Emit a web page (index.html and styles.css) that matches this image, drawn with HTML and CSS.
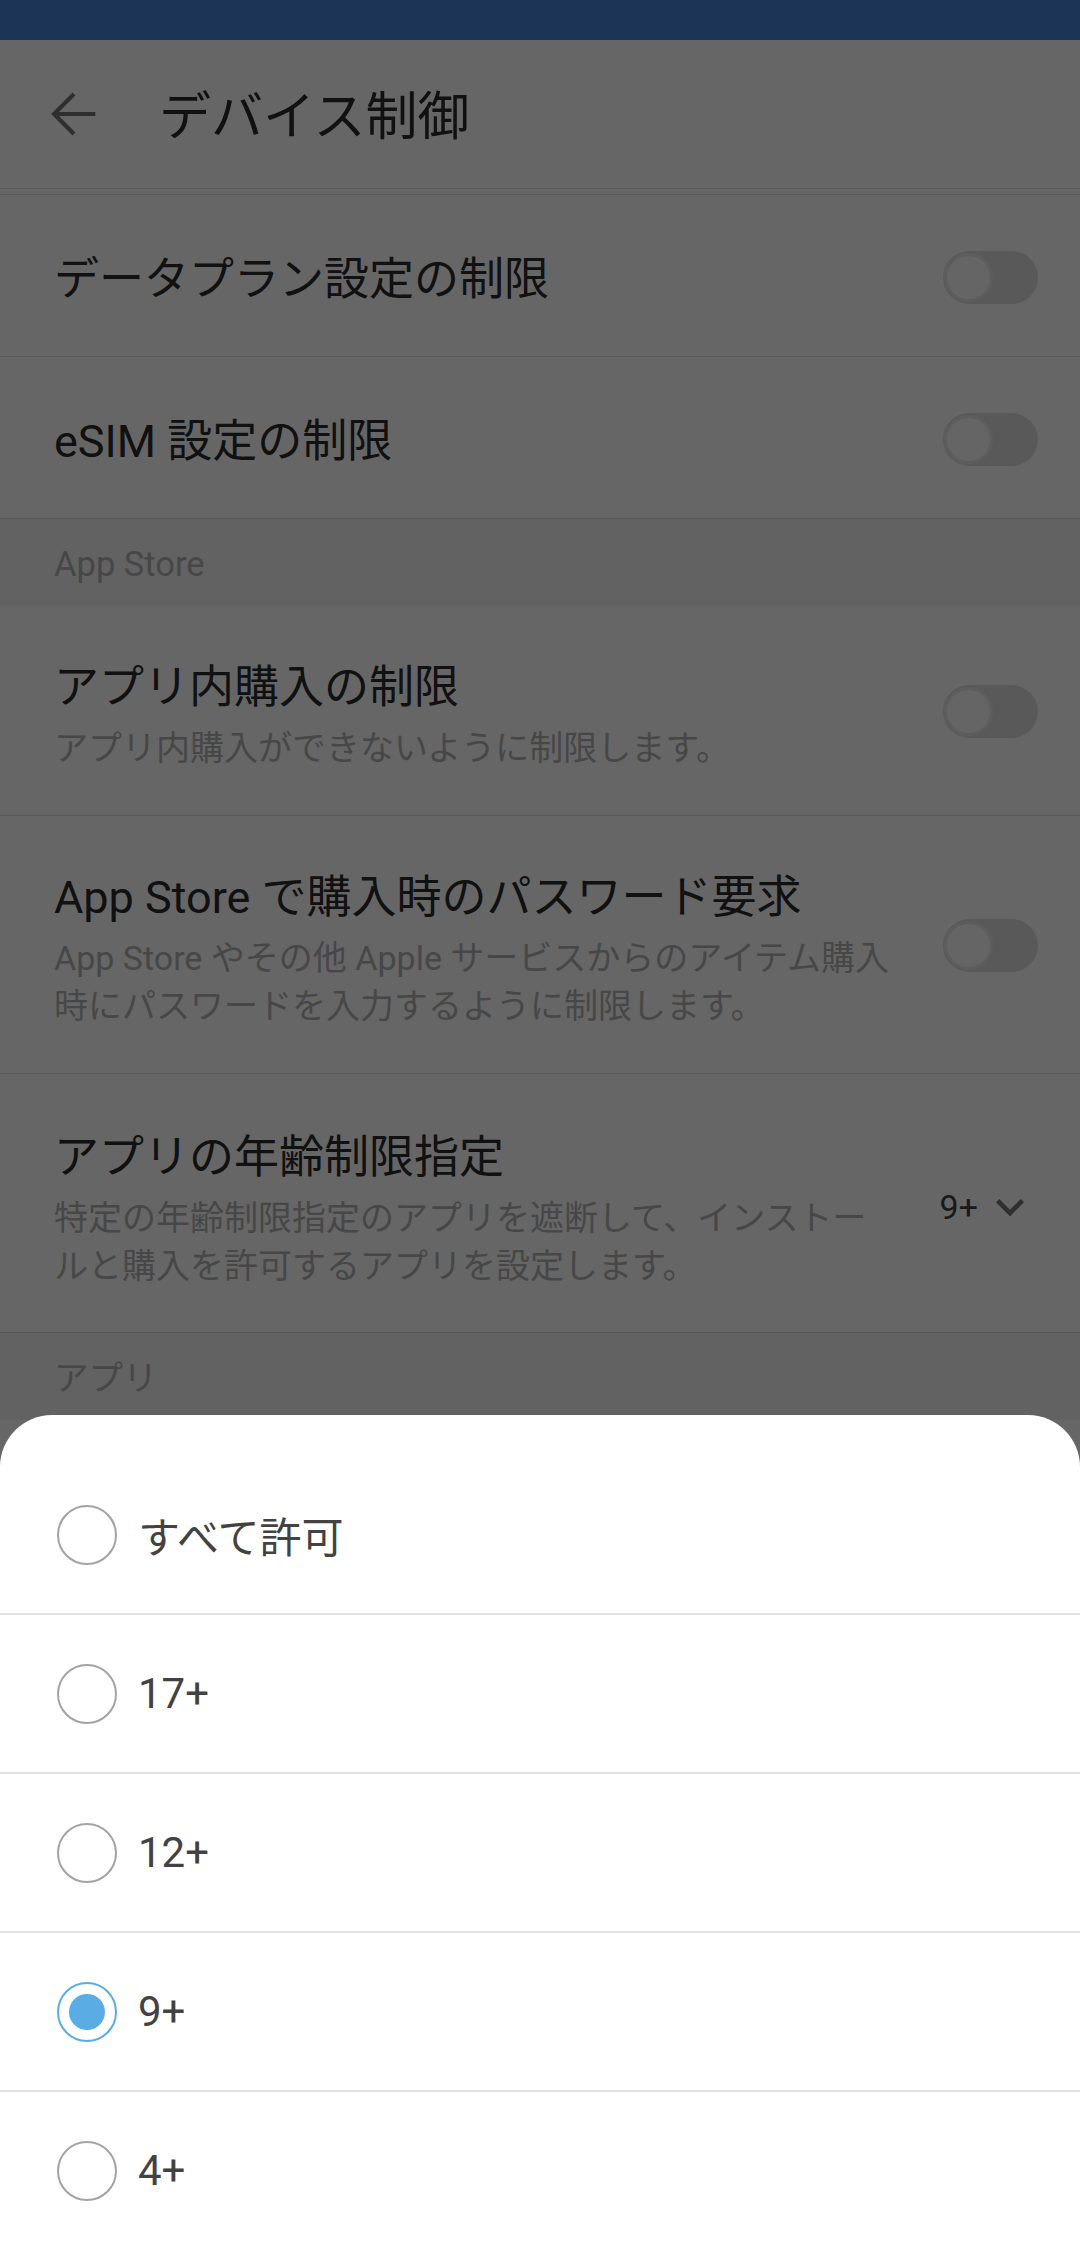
FILE: index.html
```html
<!DOCTYPE html>
<html lang="ja">
<head>
<meta charset="utf-8">
<title>デバイス制御</title>
<link rel="stylesheet" href="styles.css">
</head>
<body>
<div class="screen">
  <div class="statusbar"></div>
  <header class="appbar">
    <svg class="back" viewBox="0 0 24 24"><path d="M20 12H4.6M12 4.5L4.5 12L12 19.5" fill="none" stroke="#757575" stroke-width="1.55"/></svg>
    <h1 class="appbar-title">デバイス制御</h1>
  </header>
  <div class="list">
    <div class="row">
      <div class="text"><div class="title">データプラン設定の制限</div></div>
      <div class="ctrl"><div class="toggle"><span class="thumb"></span></div></div>
    </div>
    <div class="row">
      <div class="text"><div class="title">eSIM 設定の制限</div></div>
      <div class="ctrl"><div class="toggle"><span class="thumb"></span></div></div>
    </div>
    <div class="section">App Store</div>
    <div class="row two">
      <div class="text">
        <div class="title">アプリ内購入の制限</div>
        <div class="sub">アプリ内購入ができないように制限します。</div>
      </div>
      <div class="ctrl"><div class="toggle"><span class="thumb"></span></div></div>
    </div>
    <div class="row two">
      <div class="text">
        <div class="title">App Store で購入時のパスワード要求</div>
        <div class="sub">App Store やその他 Apple サービスからのアイテム購入時にパスワードを入力するように制限します。</div>
      </div>
      <div class="ctrl"><div class="toggle"><span class="thumb"></span></div></div>
    </div>
    <div class="row age">
      <div class="text">
        <div class="title">アプリの年齢制限指定</div>
        <div class="sub">特定の年齢制限指定のアプリを遮断して、インストールと購入を許可するアプリを設定します。</div>
      </div>
      <div class="ctrl ctrl-age">
        <span class="age-val">9+</span>
        <svg class="chev" viewBox="0 0 24 24"><path d="M16.59 8.59L12 13.17 7.41 8.59 6 10l6 6 6-6z" fill="#757575"/></svg>
      </div>
    </div>
    <div class="section">アプリ</div>
  </div>
</div>
<div class="scrim"></div>
<div class="sheet">
  <div class="opt"><span class="radio"></span><span class="opt-label">すべて許可</span></div>
  <div class="opt"><span class="radio"></span><span class="opt-label">17+</span></div>
  <div class="opt"><span class="radio"></span><span class="opt-label">12+</span></div>
  <div class="opt"><span class="radio on"></span><span class="opt-label">9+</span></div>
  <div class="opt"><span class="radio"></span><span class="opt-label">4+</span></div>
</div>
</body>
</html>
```
FILE: styles.css
```css
html, body {
  margin: 0;
  padding: 0;
}
body {
  width: 1080px;
  height: 2259px;
  overflow: hidden;
  position: relative;
  background: #ffffff;
  font-family: Roboto, "Noto Sans CJK JP", sans-serif;
}
.statusbar {
  height: 40px;
  background: #4685d9;
}
.appbar {
  height: 148px;
  display: flex;
  align-items: center;
  padding-left: 42px;
  border-bottom: 1px solid #dedede;
}
.back {
  width: 64px;
  height: 64px;
  flex: none;
}
.appbar-title {
  margin: 8px 0 0 53px;
  font-size: 52px;
  line-height: 60px;
  font-weight: 400;
  color: #2b2b2b;
}
.list {
  margin-top: 5px;
  border-top: 1px solid #dedede;
}
.row {
  display: flex;
  align-items: center;
  gap: 40px;
  padding: 56px 42px 48px 54px;
  border-bottom: 1px solid #dedede;
}
.row .ctrl {
  padding-bottom: 4px;
}
.row.two {
  padding: 54px 42px 43px 54px;
}
.row.two .ctrl {
  padding-bottom: 10px;
}
.row.age {
  padding: 56px 42px 42px 54px;
}
.text {
  flex: 1;
  min-width: 0;
}
.title {
  font-size: 45px;
  line-height: 56px;
  color: #2b2b2b;
}
.sub {
  margin-top: 8px;
  font-size: 34px;
  line-height: 48px;
  color: #b2b2b2;
}
.ctrl {
  width: 100px;
  flex: none;
  display: flex;
  align-items: center;
  justify-content: flex-end;
}
.row .ctrl-age {
  padding-bottom: 6px;
}
.toggle {
  width: 95px;
  height: 53px;
  border-radius: 27px;
  background: #dedede;
  display: flex;
  align-items: center;
  padding-left: 1px;
  box-sizing: border-box;
}
.thumb {
  width: 49px;
  height: 49px;
  border-radius: 50%;
  background: #fdfdfd;
  border: 3px solid #e9e9e9;
  box-sizing: border-box;
}
.age-val {
  font-size: 34px;
  line-height: 40px;
  color: #424242;
  margin-right: 4px;
}
.chev {
  width: 56px;
  height: 56px;
  flex: none;
}
.section {
  height: 87px;
  box-sizing: border-box;
  padding: 25px 54px 22px;
  background: #f5f5f5;
  font-size: 34.5px;
  line-height: 40px;
  color: #b2b2b2;
}
.scrim {
  position: absolute;
  inset: 0;
  background: rgba(0, 0, 0, 0.6);
}
.sheet {
  position: absolute;
  left: 0;
  right: 0;
  bottom: 0;
  background: #ffffff;
  border-radius: 52px 52px 0 0;
  padding: 41px 0 10px;
}
.opt {
  height: 157px;
  display: flex;
  align-items: center;
  gap: 21px;
  padding-left: 57px;
  font-size: 42px;
  color: #424242;
}
.opt + .opt {
  border-top: 2px solid #e2e2e2;
}
.radio {
  width: 60px;
  height: 60px;
  flex: none;
  box-sizing: border-box;
  border: 2px solid #a3a3a3;
  border-radius: 50%;
  display: flex;
  align-items: center;
  justify-content: center;
}
.radio.on {
  border-color: #5aace4;
}
.radio.on::after {
  content: "";
  width: 36px;
  height: 36px;
  border-radius: 50%;
  background: #5aace4;
}
```
